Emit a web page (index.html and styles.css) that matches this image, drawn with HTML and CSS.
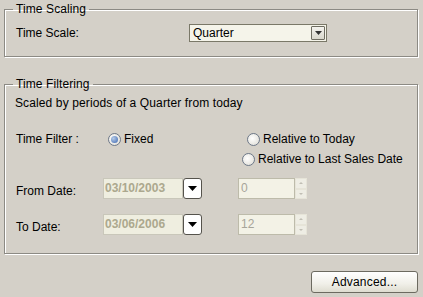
FILE: index.html
```html
<!DOCTYPE html>
<html>
<head>
<meta charset="utf-8">
<link rel="stylesheet" href="styles.css">
</head>
<body>
<div class="panel">
  <fieldset class="group g1">
    <legend class="legend">Time Scaling</legend>
    <div class="row scale-row">
      <span class="lbl w-scale">Time Scale:</span>
      <div class="combo">
        <span class="combo-text">Quarter</span>
        <span class="combo-btn"><svg width="7" height="4" viewBox="0 0 7 4"><path d="M0 0H7L3.5 4Z" fill="#333"/></svg></span>
      </div>
    </div>
  </fieldset>

  <fieldset class="group g2">
    <legend class="legend">Time Filtering</legend>
    <div class="desc">Scaled by periods of a Quarter from today</div>
    <div class="row filter-row">
      <span class="lbl w-lbl">Time Filter :</span>
      <div class="col2"><span class="radio on"></span><span class="rtext">Fixed</span></div>
      <div class="col3"><span class="radio"></span><span class="rtext">Relative to Today</span></div>
    </div>
    <div class="row filter-row2">
      <span class="w-lbl"></span>
      <div class="col2"></div>
      <div class="col3"><span class="radio"></span><span class="rtext">Relative to Last Sales Date</span></div>
    </div>
    <div class="row date-row from">
      <span class="lbl w-lbl dlbl">From Date:</span>
      <div class="col2 dcol">
        <span class="date">03/10/2003</span>
        <span class="dbtn"><svg width="9" height="5" viewBox="0 0 9 5"><path d="M0 0H9L4.5 5Z" fill="#000"/></svg></span>
      </div>
      <div class="col3 scol">
        <span class="spin-field">0</span>
        <span class="spin-btns"><span class="sb up"></span><span class="sb down"></span></span>
      </div>
    </div>
    <div class="row date-row to">
      <span class="lbl w-lbl dlbl">To Date:</span>
      <div class="col2 dcol">
        <span class="date">03/06/2006</span>
        <span class="dbtn"><svg width="9" height="5" viewBox="0 0 9 5"><path d="M0 0H9L4.5 5Z" fill="#000"/></svg></span>
      </div>
      <div class="col3 scol">
        <span class="spin-field">12</span>
        <span class="spin-btns"><span class="sb up"></span><span class="sb down"></span></span>
      </div>
    </div>
  </fieldset>

  <div class="footer">
    <button class="adv">Advanced...</button>
  </div>
</div>
</body>
</html>
```

FILE: styles.css
```css
html, body {
  margin: 0;
  padding: 0;
  background: #d4d0c8;
}
body {
  width: 423px;
  height: 297px;
  overflow: hidden;
  font-family: "Liberation Sans", Arial, sans-serif;
  font-size: 12px;
  color: #000;
}
.panel {
  display: flex;
  flex-direction: column;
  padding: 2px 5px 0 4px;
}
.group {
  margin: 0;
  padding: 0 0 0 11px;
  border: 1px solid #8c8a84;
  box-shadow: inset 1px 1px 0 #fff, 1px 1px 0 #fff;
  min-width: 0;
}
.legend {
  padding: 0 3px;
  margin-left: -3px;
  line-height: 14px;
  font-size: 12px;
  letter-spacing: 0.1px;
}
.g1 {
  padding-bottom: 14px;
}
.g2 {
  margin-top: 20px;
  padding-bottom: 18px;
}
.row {
  display: flex;
  align-items: center;
}
.scale-row {
  margin-top: 8px;
}
.w-scale {
  width: 173px;
  flex: none;
}
.combo {
  box-sizing: border-box;
  width: 138px;
  height: 18px;
  border: 1px solid #7a7868;
  background: #f5f4ea;
  display: flex;
  align-items: center;
  justify-content: space-between;
  padding-left: 3px;
  padding-right: 1px;
}
.combo-btn {
  box-sizing: border-box;
  width: 14px;
  height: 14px;
  border: 1px solid #6f6d62;
  background: linear-gradient(#f4f3ee, #d9d7cc);
  display: flex;
  align-items: center;
  justify-content: center;
  border-radius: 1px;
}
.desc {
  margin-top: 5px;
  line-height: 14px;
  margin-left: -1px;
  letter-spacing: 0.12px;
}
.w-lbl {
  width: 87px;
  flex: none;
}
.col2 {
  width: 134px;
  flex: none;
  display: flex;
  align-items: center;
}
.col3 {
  display: flex;
  align-items: center;
}
.filter-row {
  margin-top: 22px;
}
.filter-row .col2, .filter-row .col3, .filter-row2 .col3 {
  padding-left: 5px;
}
.filter-row2 {
  margin-top: 6px;
}
.radio {
  width: 11px;
  height: 11px;
  border-radius: 50%;
  border: 1px solid #6d7888;
  background: radial-gradient(circle at 40% 40%, #ffffff, #dcdad2);
  display: inline-flex;
  align-items: center;
  justify-content: center;
  box-sizing: content-box;
  flex: none;
}
.radio.on::after {
  content: "";
  width: 7px;
  height: 7px;
  border-radius: 50%;
  background: radial-gradient(circle at 35% 35%, #b5cbe8, #3d67b0);
}
.rtext {
  margin-left: 3px;
  line-height: 14px;
}
.date-row.from {
  margin-top: 12px;
}
.date-row.to {
  margin-top: 15px;
}
.dlbl {
  padding-top: 4px;
}
.dcol {
  height: 21px;
}
.date {
  box-sizing: border-box;
  width: 80px;
  height: 21px;
  border: 1px solid #c9c7ba;
  background: #efeee0;
  color: #aca88e;
  font-weight: bold;
  line-height: 19px;
  padding-left: 1px;
}
.dbtn {
  box-sizing: border-box;
  width: 19px;
  height: 21px;
  border: 1px solid #55534c;
  border-radius: 3px;
  background: #fff;
  display: flex;
  align-items: center;
  justify-content: center;
}
.scol {
  height: 21px;
  padding-left: 1px;
}
.spin-field {
  box-sizing: border-box;
  width: 57px;
  height: 21px;
  border: 1px solid #bdbbaa;
  background: #f3f2e6;
  color: #a7a59a;
  line-height: 19px;
  padding-left: 2px;
}
.spin-btns {
  display: flex;
  flex-direction: column;
  width: 12px;
  height: 21px;
}
.sb {
  flex: 1;
  border: 1px solid #e6e4d8;
  background: #eeede4;
  position: relative;
}
.sb::after {
  content: "";
  position: absolute;
  left: 3px;
  top: 3px;
  border-left: 2px solid transparent;
  border-right: 2px solid transparent;
}
.sb.up::after {
  border-bottom: 2px solid #c0beb4;
}
.sb.down::after {
  border-top: 2px solid #c0beb4;
}
.footer {
  display: flex;
  justify-content: flex-end;
  margin-top: 17px;
}
.adv {
  width: 107px;
  height: 22px;
  margin: 0;
  font-family: "Liberation Sans", Arial, sans-serif;
  font-size: 12px;
  letter-spacing: 0.2px;
  color: #000;
  border: 1px solid #6c6a60;
  border-radius: 3px;
  background: linear-gradient(#ffffff, #f0efe8 60%, #dedcd0);
  padding: 0;
}
```
